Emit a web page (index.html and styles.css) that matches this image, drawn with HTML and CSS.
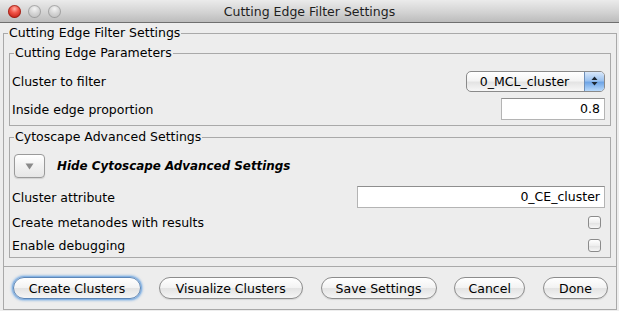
FILE: index.html
```html
<!DOCTYPE html>
<html>
<head>
<meta charset="utf-8">
<link rel="stylesheet" href="styles.css">
</head>
<body>
<div class="titlebar">
  <div class="lights">
    <span class="light red"></span>
    <span class="light gray"></span>
    <span class="light gray"></span>
  </div>
  <div class="title">Cutting Edge Filter Settings</div>
  <div></div>
</div>
<div class="content">
  <fieldset class="group outer">
    <legend>Cutting Edge Filter Settings</legend>
    <fieldset class="group inner params">
      <legend>Cutting Edge Parameters</legend>
      <div class="row r28">
        <span class="label">Cluster to filter</span>
        <div class="select">
          <span class="select-text">0_MCL_cluster</span>
          <span class="select-arrows">
            <svg width="7" height="10" viewBox="0 0 7 10"><path d="M3.5 0.5 L6.5 4 L0.5 4 Z M0.5 6 L6.5 6 L3.5 9.5 Z" fill="#1c2733"/></svg>
          </span>
        </div>
      </div>
      <div class="row r28">
        <span class="label">Inside edge proportion</span>
        <div class="field w-small">0.8</div>
      </div>
    </fieldset>
    <fieldset class="group inner adv">
      <legend>Cytoscape Advanced Settings</legend>
      <div class="row r28 start">
        <div class="toggle">
          <svg width="9" height="7" viewBox="0 0 9 7"><path d="M0.5 0.5 L8.5 0.5 L4.5 6.5 Z" fill="#8a8a8a"/></svg>
        </div>
        <span class="hide-label">Hide Cytoscape Advanced Settings</span>
      </div>
      <div class="row r26 mt4">
        <span class="label">Cluster attribute</span>
        <div class="field w-wide">0_CE_cluster</div>
      </div>
      <div class="row r24">
        <span class="label">Create metanodes with results</span>
        <span class="check"></span>
      </div>
      <div class="row r23">
        <span class="label">Enable debugging</span>
        <span class="check"></span>
      </div>
    </fieldset>
  </fieldset>
  <div class="buttons">
    <button class="btn focus b-create">Create Clusters</button>
    <button class="btn b-vis">Visualize Clusters</button>
    <button class="btn b-save">Save Settings</button>
    <button class="btn b-cancel">Cancel</button>
    <button class="btn b-done">Done</button>
  </div>
</div>
</body>
</html>
```
FILE: styles.css
```css
* { box-sizing: border-box; }
html, body { margin: 0; padding: 0; }
body {
  width: 619px;
  height: 311px;
  overflow: hidden;
  background: #ededed;
  font-family: "DejaVu Sans", sans-serif;
  font-size: 12.5px;
  color: #000;
}

.titlebar {
  height: 23px;
  display: grid;
  grid-template-columns: 1fr auto 1fr;
  align-items: center;
  background: linear-gradient(#ebebeb, #d3d3d3 55%, #bcbcbc);
  border-bottom: 1px solid #6f6f6f;
}
.lights {
  display: flex;
  gap: 7px;
  padding-left: 8px;
  padding-top: 1px;
}
.light {
  width: 13px;
  height: 13px;
  border-radius: 50%;
  display: block;
}
.light.red {
  background: radial-gradient(circle at 50% 30%, #ffb3a8 0, #f2574a 35%, #c9261b 75%, #9c1a12 100%);
  box-shadow: inset 0 0 0 1px rgba(120, 20, 10, .55);
}
.light.gray {
  background: radial-gradient(circle at 50% 30%, #f4f4f4 0, #d4d4d4 45%, #b5b5b5 100%);
  box-shadow: inset 0 0 0 1px rgba(110, 110, 110, .45);
}
.title {
  font-size: 12.5px;
  color: #1e1e1e;
  padding-top: 1px;
}

.content {
  padding: 3px 2px 0 3px;
}

fieldset.group {
  margin: 0;
  min-width: 0;
  border: 1px solid #a9a9a9;
}
fieldset.group > legend {
  line-height: 14px;
  padding: 0 1px;
}
fieldset.outer {
  padding: 6px 5px 8px 5px;
}
fieldset.outer > legend {
  margin-left: -1px;
}
fieldset.inner {
  padding: 7px 5px 2px 2px;
}
fieldset.inner > legend {
  margin-left: 2px;
}
fieldset.adv {
  margin-top: 4px;
  padding-top: 8px;
  padding-bottom: 0;
}

.row {
  display: flex;
  align-items: center;
  justify-content: space-between;
}
.row.start { justify-content: flex-start; }
.r28 { height: 28px; }
.r26 { height: 26px; }
.r24 { height: 24px; }
.r23 { height: 23px; }
.mt4 { margin-top: 4px; }

.select {
  width: 139px;
  height: 21px;
  display: flex;
  border: 1px solid #8a8a8a;
  border-radius: 5px;
  overflow: hidden;
  background: linear-gradient(#ffffff, #f4f4f4 45%, #e4e4e4 55%, #f7f7f7);
}
.select-text {
  flex: 1;
  text-align: center;
  line-height: 19px;
  padding-right: 2px;
}
.select-arrows {
  width: 20px;
  display: flex;
  align-items: center;
  justify-content: center;
  border-left: 1px solid #6f8fb8;
  background: linear-gradient(#d9e8fa, #9cc2ef 45%, #6fa5e6 55%, #b9dafc);
}

.field {
  height: 22px;
  background: #fff;
  border: 1px solid #b4b4b4;
  border-top-color: #8e8e8e;
  text-align: right;
  padding: 0 4px;
  line-height: 20px;
}
.w-small { width: 104px; }
.w-wide { width: 248px; }

.toggle {
  width: 31px;
  height: 24px;
  border: 1px solid #9a9a9a;
  border-radius: 4px;
  background: linear-gradient(#ffffff, #f1f1f1 50%, #e6e6e6);
  display: flex;
  align-items: center;
  justify-content: center;
  margin-left: 2px;
  box-shadow: 0 1px 1px rgba(0,0,0,.12);
}
.hide-label {
  font-weight: bold;
  font-style: italic;
  font-size: 11.9px;
  margin-left: 12px;
}

.check {
  width: 13px;
  height: 13px;
  border: 1px solid #8b8b8b;
  border-radius: 3px;
  background: linear-gradient(#ffffff, #eeeeee 50%, #e2e2e2 55%, #f6f6f6);
  margin-right: 4px;
}

.buttons {
  height: 43px;
  border: 1px solid #a9a9a9;
  border-top: none;
  display: flex;
  align-items: center;
  justify-content: space-between;
  padding: 0 8px 0 9px;
}
.btn {
  font: inherit;
  color: #000;
  height: 22px;
  padding: 0;
  border-radius: 11px;
  border: 1px solid #8c8c8c;
  background: linear-gradient(#ffffff, #f3f3f3 48%, #e3e3e3 52%, #f5f5f5);
  box-shadow: 0 1px 1px rgba(0,0,0,.1);
}
.btn.focus {
  border-color: #5d86b6;
  box-shadow: 0 0 0 1px #86b3e3, 0 0 2px 2px rgba(110, 165, 225, .55);
}
.b-create { width: 128px; }
.b-vis { width: 144px; }
.b-save { width: 116px; }
.b-cancel { width: 71px; }
.b-done { width: 65px; }
```
